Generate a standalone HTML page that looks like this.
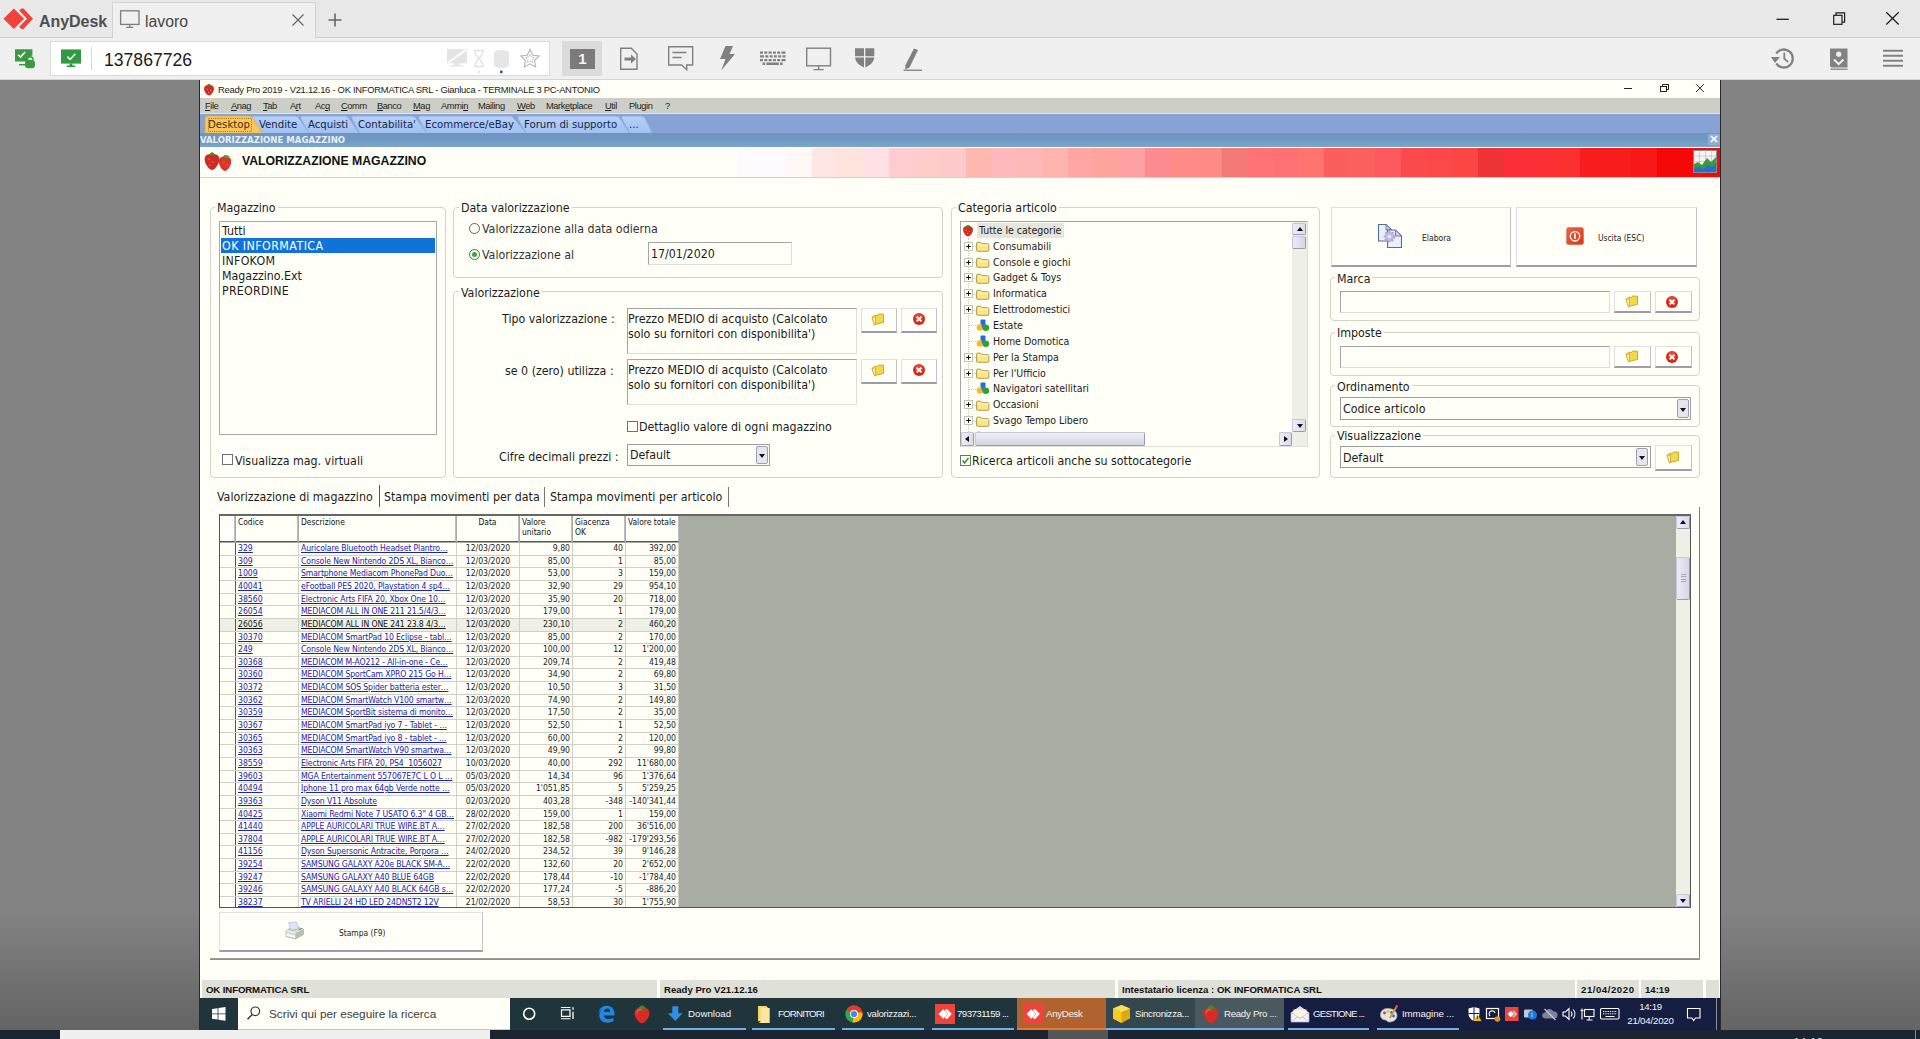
<!DOCTYPE html>
<html lang="it">
<head>
<meta charset="utf-8">
<title>AnyDesk - lavoro</title>
<style>
*{box-sizing:border-box;margin:0;padding:0}
html,body{width:1920px;height:1039px;overflow:hidden;background:#838383}
#shade{position:absolute;left:0;top:910px;width:1920px;height:120px;background:linear-gradient(180deg,#838383,#646464)}
#strip{position:absolute;left:0;top:1030px;width:1920px;height:9px;background:#1b2430}
body{position:relative;font-family:"Liberation Sans","DejaVu Sans",sans-serif;font-size:13px;color:#111}
.a{position:absolute}
i{font-style:normal}
b{font-weight:normal}
/* ---------- AnyDesk chrome ---------- */
#adt{position:absolute;left:0;top:0;width:1920px;height:38px;background:#e8e8e8;border-bottom:1px solid #cfcfcf}
#adtab{position:absolute;left:112px;top:2px;width:204px;height:36px;background:#f0f0f0;border:1px solid #d2d2d2;border-bottom:none}
#adbar{position:absolute;left:0;top:38px;width:1920px;height:42px;background:#f0f0f0;border-bottom:1px solid #d4d4d4}
#adaddr{position:absolute;left:50px;top:41px;width:500px;height:35px;background:#fff;border:1px solid #dadada}
.adname{position:absolute;left:39px;top:12.5px;font-size:16px;font-weight:bold;color:#4f4f4f;letter-spacing:-0.05px;line-height:18px}
.adtabt{position:absolute;left:145px;top:12.5px;font-size:15.8px;color:#444;line-height:18px}
.adid{position:absolute;left:104px;top:49.7px;font-size:17.6px;color:#1c1c1c;line-height:21px}
/* ---------- remote window ---------- */
#rw{position:absolute;left:199px;top:80px;width:1522px;height:950px;background:#fffff7;border-left:1px solid #2a2a2a;border-right:1px solid #2a2a2a;overflow:hidden}
#rw *{position:absolute}
#rw u, #rw span, #rw em, #rw .st{position:static}
.app{font-family:"DejaVu Sans Condensed","DejaVu Sans","Liberation Sans",sans-serif;font-stretch:condensed}
#wtitle{left:0;top:0;width:1520px;height:18px;background:#fffff7}
#wtitle .t{font-family:"Liberation Sans",sans-serif;left:18px;top:3.5px;font-size:9.4px;letter-spacing:-.26px;color:#222;white-space:nowrap}
#wmenu{left:0;top:18px;width:1520px;height:16px;background:#cdcfc7}
#wmenu b{font-family:"Liberation Sans",sans-serif;top:3px;font-size:9.3px;letter-spacing:-.4px;color:#222;white-space:nowrap}
#wmenu b u{text-decoration:underline}
#wtabs{left:0;top:34px;width:1520px;height:20px;background:#87a3d6}
#wsub{left:0;top:53px;width:1520px;height:14px;background:linear-gradient(180deg,#7194c1 0,#7098c3 50%,#7aa7c9 100%)}
#wsub .t{left:0;top:1px;font-size:9.5px;font-weight:bold;color:#e9eff6;white-space:nowrap;font-family:"DejaVu Sans Condensed","DejaVu Sans",sans-serif}
#whead{left:0;top:67px;width:1520px;height:31px;background:#fffff7}
#whead .t{font-family:"Liberation Sans",sans-serif;left:42px;top:7px;font-size:12.25px;font-weight:bold;color:#111;white-space:nowrap}
.wt{font-family:"DejaVu Sans Condensed","DejaVu Sans",sans-serif;font-size:11.3px;color:#15254a;top:4px;white-space:nowrap}
/* group boxes */
.gb{border:1px solid #d3d4c9;border-radius:4px}
.gl{margin-top:1px;background:#fffff7;font-size:12.3px;color:#1c1c1c;white-space:nowrap;padding:0 2px;line-height:14px;height:14px}
.lbl{margin-top:1px;font-size:12.3px;color:#1c1c1c;white-space:nowrap;line-height:15px}
.inp{background:#fffff7;border:1px solid #a3a4a6;border-right-color:#dedfd6;border-bottom-color:#dedfd6}
.cmb{border-color:#9c9da2 !important}
.btn{background:#fffff7;border:1px solid #dfdfe6;border-right:1px solid #c2c2ce;border-bottom:2px solid #9c9cac}
.cb{width:11px;height:11px;border:1px solid #66747e;background:#fffff7}
.rd{width:11px;height:11px;border:1px solid #56677a;border-radius:50%;background:#fffff7}
.ddb{width:12px;background:#e6e6ee;border:1px solid #9d9fae;border-radius:2px}
.ddb i{left:2px;top:50%;margin-top:-1px;width:0;height:0;border-left:3px solid transparent;border-right:3px solid transparent;border-top:4px solid #111}
.tl{font-size:10.5px;color:#1c1c1c;white-space:nowrap;line-height:15px;height:15px}
.tt{font-family:"Liberation Sans",sans-serif;font-size:9.7px;letter-spacing:-.3px;color:#f4f4f4;white-space:nowrap;line-height:13px;height:13px}
.ts{font-family:"Liberation Sans",sans-serif;font-size:11.75px;color:#3c3c3c;white-space:nowrap;line-height:15px}
/* grid */
#grid{left:19px;top:434px;width:1472px;height:394px;background:#a9aca2;border:1px solid #555;border-top:2px solid #666;overflow:hidden}
.ghead{top:0;height:26px;background:#fffff7;border-right:1px solid #b9bbd0;border-bottom:1px solid #555;font-size:8.4px;line-height:10px;color:#111;padding:1px 2px 0 2px;overflow:hidden;white-space:nowrap}
.grow{left:0;width:459px;background:#fffff7;border-bottom:1px solid #cfd0c6;font-size:8.6px;color:#222;white-space:nowrap}
.grow.sel{background:#eef0e6}
.grow .rh{left:0;top:0;bottom:0;width:16px;border-right:1px solid #555}
.grow .c{top:0;bottom:0;overflow:hidden;line-height:11px;border-right:1px solid #cfd0c6;padding-top:0}
.grow u{text-decoration:underline;color:#1a22b4}
.grow.sel u{color:#111}
.c1{left:16px;width:63px;padding-left:2px}
.c2{left:79px;width:158px;padding-left:2px;letter-spacing:-0.12px}
.c3{left:237px;width:63px;text-align:center}
.c4{left:300px;width:53px;text-align:right;padding-right:2px}
.c5{left:353px;width:53px;text-align:right;padding-right:2px}
.c6{left:406px;width:53px;text-align:right;padding-right:2px}
.vsb{right:0;top:0;width:14px;bottom:0;background:#eef0e5}
.sbtn{left:0;width:14px;height:13px;background:linear-gradient(90deg,#efedf8,#dddbea);border:1px solid #c8c6d8;border-right-color:#9c9ab2;border-bottom-color:#9c9ab2;border-radius:2px}
.sbtn.up{top:0}.sbtn.dn{bottom:0}
.sbtn i{left:3px;top:3px;width:0;height:0;border-left:3px solid transparent;border-right:3px solid transparent}
.sbtn.up i{border-bottom:4px solid #111}
.sbtn.dn i{border-top:4px solid #111;top:4px}
.thumb{left:0;top:41px;width:14px;height:43px;background:linear-gradient(90deg,#ecebf5,#d6d5e4);border:1px solid #c8c6d8;border-right-color:#9c9ab2;border-bottom-color:#9c9ab2;border-radius:2px}
.grip{left:4px;top:50%;margin-top:-5px;width:5px;height:10px;background:repeating-linear-gradient(180deg,#a8a6c0 0 1px,transparent 1px 2.500px)}
/* status + taskbar */
#wstat{left:0;top:900px;width:1520px;height:18px;background:#fffff7}
#wstat b{font-family:"Liberation Sans",sans-serif;top:0;height:18px;background:#dfe0d8;font-size:9.6px;font-weight:bold;color:#111;line-height:19px;padding-left:4px;white-space:nowrap}
#tb{left:0;top:918px;width:1520px;height:32px;background:#20343c}
#tb .ti{top:0;height:31px;font-size:10.2px;color:#f2f2f2;white-space:nowrap;line-height:31px}
#tb .ti em{font-style:normal;left:0;right:0;bottom:0;height:2px;background:#76b9ed;position:absolute}
#tb .ti .lb{position:absolute;left:31px;top:0;letter-spacing:-0.1px}
</style>
</head>
<body>

<div id="shade"></div>
<div id="strip"><div class="a" style="left:60px;top:0;width:430px;height:9px;background:#f0f0f0"></div><div class="a" style="left:1048px;top:0;width:60px;height:9px;background:#565656"></div><div class="a" style="left:1915px;top:0;width:1px;height:9px;background:#8a8a8a"></div><div class="a" style="left:1794px;top:5.500px;font-size:9.500px;color:#eee;line-height:9px;letter-spacing:1.200px">14:19</div></div>
<!-- AnyDesk title bar -->
<div id="adt"></div>
<svg class="a" style="left:0;top:0" width="112" height="38" viewBox="0 0 112 38">
  <path d="M3.5 18.7 L13.8 8.4 L24.1 18.7 L13.8 29 Z" fill="#ef443b"/>
  <path d="M21.3 8.4 L23.5 8.4 L33 18.7 L23.5 29 L21.3 29 L19.2 26.8 L27 18.7 L19.2 10.6 Z" fill="#ef443b"/>
</svg>
<div class="adname">AnyDesk</div>
<div id="adtab"></div>
<svg class="a" style="left:119px;top:9px" width="22" height="20" viewBox="0 0 22 20">
  <rect x="1.6" y="1.8" width="18.4" height="13.6" fill="none" stroke="#7c7c7c" stroke-width="1.3"/>
  <path d="M10.8 15.4v2.6M7.3 18.3h7" stroke="#7c7c7c" stroke-width="1.2" fill="none"/>
</svg>
<div class="adtabt">lavoro</div>
<svg class="a" style="left:291px;top:13px" width="14" height="14" viewBox="0 0 14 14"><path d="M1.5 1.5l11 11M12.5 1.5l-11 11" stroke="#666" stroke-width="1.2"/></svg>
<svg class="a" style="left:327px;top:12px" width="16" height="16" viewBox="0 0 16 16"><path d="M8 1.5v13M1.5 8h13" stroke="#666" stroke-width="1.6"/></svg>
<!-- window buttons -->
<svg class="a" style="left:1770px;top:6px" width="140" height="26" viewBox="0 0 140 26">
  <path d="M6.5 13.3h12.3" stroke="#1e1e1e" stroke-width="1.3"/>
  <rect x="63.7" y="9.3" width="8.3" height="9" fill="#e8e8e8" stroke="#1e1e1e" stroke-width="1.2"/>
  <path d="M66 9.3V6.8h8.6v9.4h-2.6" fill="none" stroke="#1e1e1e" stroke-width="1.2"/>
  <path d="M116.3 6.2l12.4 12.3M128.7 6.2l-12.4 12.3" stroke="#1e1e1e" stroke-width="1.2"/>
</svg>
<!-- AnyDesk toolbar -->
<div id="adbar"></div>
<div id="adaddr"></div>
<svg class="a" style="left:14px;top:48px" width="24" height="22" viewBox="0 0 24 22">
  <path d="M1 1.2h17.4v6.4c-2.6.4-4.2 2.2-4.200 4.800v1H1z" fill="#3a9a44"/>
  <path d="M4.200 6.800l2.300 2.300 4.600-5" stroke="#fff" stroke-width="1.5" fill="none"/>
  <path d="M5 16h7v1.400H5z" fill="#3a9a44"/>
  <path d="M12.600 12.200c0-2 1.300-3.500 3.300-3.500s3.300 1.500 3.300 3.500" fill="none" stroke="#3a9a44" stroke-width="1.500"/>
  <rect x="11" y="12" width="10" height="8.200" rx="3.200" fill="#3a9a44"/>
</svg>
<svg class="a" style="left:60px;top:48px" width="24" height="22" viewBox="0 0 24 22">
  <rect x="1" y="1.400" width="20" height="14.200" fill="#2f9a41"/>
  <path d="M7.400 8.600l2.700 2.700 5.300-5.600" stroke="#fff" stroke-width="1.500" fill="none"/>
  <path d="M9.600 15.600h2.800v2h2.800v1.300H6.800v-1.300h2.800z" fill="#2f9a41"/>
</svg>
<div class="a" style="left:91px;top:47px;width:1px;height:23px;background:#d8d8d8"></div>
<div class="adid">137867726</div>
<!-- faded icons -->
<svg class="a" style="left:444px;top:46px" width="100" height="30" viewBox="0 0 100 30">
  <path d="M3 3.200h20v14H3z" fill="#e4e4e4"/><path d="M10 17h6v2.500h-6z" fill="#e4e4e4"/><path d="M6 20h14" stroke="#e4e4e4" stroke-width="1.300"/>
  <path d="M4 16.500L22 4" stroke="#fff" stroke-width="1.800"/>
  <path d="M30 4.500h10M30 20.500h10M31 5c0 5 3.500 5.500 3.500 7.500S31 15 31 20M39 5c0 5-3.500 5.500-3.500 7.500S39 15 39 20" stroke="#e2e2e2" stroke-width="1.400" fill="none"/>
  <path d="M50 7c0-4 15-4 15 0v12c0 4-15 4-15 0z" fill="#e6e6e6"/>
  <path d="M86 3.200l2.800 6 6.400.8-4.700 4.500 1.200 6.500-5.700-3.200-5.700 3.200 1.200-6.500-4.700-4.500 6.400-.8z" fill="#fff" stroke="#b4b4b4" stroke-width="1.100"/>
  <path d="M86 8.200l1.300 2.900 3 .4-2.200 2.100.6 3.100-2.700-1.500-2.700 1.500.6-3.100-2.200-2.100 3-.4z" fill="none" stroke="#c2c2c2" stroke-width="0.800"/>
  <circle cx="35" cy="26" r="1.200" fill="#dfe5f1"/><circle cx="57.300" cy="26" r="1.400" fill="#234f9f"/>
</svg>
<!-- monitor "1" button -->
<div class="a" style="left:562px;top:41px;width:40px;height:35px;background:#dbdbdb"></div>
<div class="a" style="left:570px;top:49px;width:25px;height:20px;background:#7b7b7b;color:#f4f4f4;font-weight:bold;font-size:15px;line-height:20px;text-align:center">1</div>
<!-- toolbar icons -->
<svg class="a" style="left:612px;top:40px" width="330" height="38" viewBox="0 0 330 38">
  <g fill="none" stroke="#808080" stroke-width="1.400">
    <path d="M8.700 8.200h10.600l5.700 5.800v15.300H8.700z"/>
    <path d="M56.700 6.700h24v18.300h-6v4.700l-5-4.700H56.700z"/>
    <path d="M60.500 12.500h14M60.500 17.500h9" stroke-width="1.600"/>
    <rect x="194.700" y="8.200" width="23.800" height="17.600"/>
    <path d="M206.600 25.800v3.400M201.500 29.600h10.200"/>
  </g>
  <g fill="#808080">
    <path d="M12.500 17.500h6.500v-3l5 4.500-5 4.500v-3h-6.500z"/>
    <path d="M113.500 6h7.500l-3.500 8h5.500l-13.800 16.500 4.300-11.500h-5.500z"/>
    <path d="M148 11.500h3v2.300h-3zM152.300 11.500h3v2.300h-3zM156.600 11.500h3v2.300h-3zM160.900 11.500h3v2.300h-3zM165.200 11.500h3v2.300h-3zM169.500 11.500h4v2.300h-4zM148 15.200h4v2.300h-4zM153.300 15.200h3v2.300h-3zM157.600 15.200h3v2.300h-3zM161.900 15.200h3v2.300h-3zM166.200 15.200h3v2.300h-3zM170.500 15.200h3v2.300h-3zM148 18.900h3v2.300h-3zM152.300 18.900h3v2.300h-3zM156.600 18.900h3v2.300h-3zM160.900 18.900h3v2.300h-3zM165.200 18.900h3v2.300h-3zM169.500 18.900h4v2.300h-4zM150.500 22.600h2.500v2.300h-2.500zM154.300 22.600h12.500v2.300h-12.500zM168.100 22.600h2.500v2.300h-2.500z"/>
    <path d="M243 8.300h9v8h-9zM253.300 8.300h9v8h-9zM243 17.600h9v9.800c-4.500-1.700-8.300-4.800-9-9.800zM253.300 17.600h9c-.7 5-4.500 8.100-9 9.800z"/>
    <path d="M302 8.500l4 1.600-8.500 17.400-4.200 2 .2-4.500z"/>
    <path d="M291.500 29.600h18.500v1.300h-18.500z"/>
  </g>
</svg>
<svg class="a" style="left:1766px;top:44px" width="144" height="30" viewBox="0 0 144 30">
  <path d="M10.300 9.500a9 9 0 1 1 0 10" fill="none" stroke="#828282" stroke-width="2.300"/>
  <path d="M5 13h9l-5 6z" fill="#828282"/>
  <path d="M18.300 8.500v6.200l3.800 3.300" fill="none" stroke="#828282" stroke-width="1.800"/>
  <path d="M64 4.500h17.500v19H66a2 2 0 0 1-2-2z" fill="#828282"/>
  <path d="M64.500 25.200h17" stroke="#828282" stroke-width="1.300"/>
  <circle cx="72.700" cy="10.200" r="2.600" fill="#f0f0f0"/>
  <path d="M68 15.500l4.700 4.700 4.700-4.700" stroke="#f0f0f0" stroke-width="2" fill="none"/>
  <path d="M117 6.700h20M117 11.700h20M117 16.700h20M117 21.700h20" stroke="#828282" stroke-width="1.900"/>
</svg>

<div id="rw" class="app">
<!-- window title -->
<div id="wtitle">
  <svg style="left:3px;top:3px" width="12" height="13" viewBox="0 0 12 13"><path d="M6 2.600C2 1.500.5 4 1.200 7c.6 2.600 2.800 5.200 4.800 5.500 2-.3 4.200-2.900 4.800-5.500C11.500 4 10 1.500 6 2.600z" fill="#d42a22"/><path d="M3 2.600L6 .8l3 1.800-3 .9z" fill="#4a8a2a"/><circle cx="4" cy="6" r=".5" fill="#f7b0a0"/><circle cx="7.500" cy="7.500" r=".5" fill="#f7b0a0"/><circle cx="5.500" cy="9.500" r=".5" fill="#f7b0a0"/></svg>
  <b class="t">Ready Pro 2019 - V21.12.16 - OK INFORMATICA SRL - Gianluca - TERMINALE 3 PC-ANTONIO</b>
  <svg style="left:1418px;top:1px" width="96" height="14" viewBox="0 0 96 14"><path d="M6 7.500h8" stroke="#222" stroke-width="1"/><rect x="42.500" y="5.500" width="6" height="5" fill="#fffff7" stroke="#222" stroke-width="1"/><path d="M44.500 5.500V3.500h6v5h-2" fill="none" stroke="#222" stroke-width="1"/><path d="M78 3.200l7.800 7.800M85.800 3.200L78 11" stroke="#222" stroke-width="1"/></svg>
</div>
<!-- menu bar -->
<div id="wmenu">
  <b style="left:5px"><u>F</u>ile</b><b style="left:31px"><u>A</u>nag</b><b style="left:63px"><u>T</u>ab</b><b style="left:90px">A<u>r</u>t</b><b style="left:115px">Ac<u>q</u></b><b style="left:141px"><u>C</u>omm</b><b style="left:177px"><u>B</u>anco</b><b style="left:213px"><u>M</u>ag</b><b style="left:241px">Ammi<u>n</u></b><b style="left:278px">Mailin<u>g</u></b><b style="left:317px"><u>W</u>eb</b><b style="left:346px">Mark<u>e</u>tplace</b><b style="left:405px"><u>U</u>til</b><b style="left:429px">Plugin</b><b style="left:465px">?</b>
</div>
<div style="left:0;top:33px;width:1520px;height:1px;background:#dbe4f4"></div>
<!-- tab strip -->
<div id="wtabs">
  <svg style="left:1.500px;top:0" width="460" height="20" viewBox="0 0 460 20"><defs><linearGradient id="tg" x1="0" y1="0" x2="0" y2="1"><stop offset="0" stop-color="#b6d1f8"/><stop offset="1" stop-color="#a0c0f0"/></linearGradient></defs>
    <g fill="url(#tg)" stroke="#8ca8dc" stroke-width=".9">
      <path d="M428 20L420 5q-1.500-3 2-3h17q3 0 4.500 3L451 20z"/>
      <path d="M324 20L316 5q-1.500-3 2-3h96q3 0 4.500 3L428 20z"/>
      <path d="M225 20L217 5q-1.500-3 2-3h89q3 0 4.500 3L325 20z"/>
      <path d="M158 20L150 5q-1.500-3 2-3h58q3 0 4.500 3L226 20z"/>
      <path d="M107 20L99 5q-1.500-3 2-3h42q3 0 4.500 3L158 20z"/>
      <path d="M58 20L50 5q-1.500-3 2-3h41q3 0 4.500 3L108 20z"/>
    </g>
    <path d="M3 20V5q0-3 3-3h41q3 0 4.500 3L61 20z" fill="#fbc65c" stroke="#e0a840" stroke-width=".8"/>
    <rect x="6.500" y="4.500" width="43" height="13" fill="none" stroke="#7a5a10" stroke-width=".8" stroke-dasharray="1 1.200"/>
  </svg>
  <b class="wt" style="left:8px;color:#4a3000">Desktop</b>
  <b class="wt" style="left:59px">Vendite</b>
  <b class="wt" style="left:108px">Acquisti</b>
  <b class="wt" style="left:158px">Contabilita'</b>
  <b class="wt" style="left:225px">Ecommerce/eBay</b>
  <b class="wt" style="left:324px">Forum di supporto</b>
  <b class="wt" style="left:429px">...</b>
</div>
<!-- sub title -->
<div id="wsub"><b class="t">VALORIZZAZIONE MAGAZZINO</b>
  <div style="left:1508px;top:1px;width:12px;height:11px;background:#8fb0d4;border-radius:2px"></div>
  <svg style="left:1510px;top:2px" width="8" height="8" viewBox="0 0 8 8"><path d="M1 1l6 6M7 1L1 7" stroke="#fff" stroke-width="1.700"/></svg>
</div>
<!-- header with gradient -->
<div id="whead">
  <div style="left:537px;top:1px;width:49px;height:28.5px;background:#fffafd"></div>
  <div style="left:586px;top:1px;width:934px;height:28.5px;background:linear-gradient(90deg,#fff8f6 0 26px,#ffe6e2 26px 51px,#ffe4dc 51px 77px,#ffe0e4 77px 103px,#ffccd0 103px 129px,#ffcccc 129px 154px,#ffcaca 154px 180px,#ffb8b0 180px 205px,#ffb8bc 205px 231px,#ffb8b8 231px 256px,#ffb4b0 256px 282px,#ffa6a2 282px 308px,#ffa49c 308px 333px,#ffa0a4 333px 359px,#fc8c90 359px 384px,#ff8c88 384px 410px,#ff8a86 410px 436px,#f47a78 436px 461px,#ff7276 461px 487px,#ff7074 487px 512px,#ff746e 512px 538px,#fc5e5c 538px 564px,#fc605c 564px 589px,#fc5a5e 589px 615px,#fc4a4c 615px 640px,#fc4848 640px 666px,#fc4644 666px 692px,#ee3434 692px 717px,#fc2e36 717px 743px,#fc3034 743px 768px,#fc302e 768px 794px,#f81c1e 794px 820px,#f81c1c 820px 845px,#f81818 845px 871px,#f40808 871px 934px)"></div>
  <div style="left:0;top:29.5px;width:1520px;height:1px;background:#d2d3ca"></div>
  <svg style="left:3px;top:3px" width="32" height="24" viewBox="0 0 32 24">
    <path d="M9 4.500C3 3 .8 7 2 11.500c1 4 4 8 7 8.500 3-.5 6-4.500 7-8.500C17.200 7 15 3 9 4.500z" fill="#cf2b22"/>
    <path d="M22 7C17 6 15 9.500 16 13.500c.8 3.500 3.300 7 6 7.500 2.700-.5 5.200-4 6-7.500C29 9.500 27 6 22 7z" fill="#d8362a"/>
    <path d="M5.500 4.500L9 2l3.500 2.500L9 6z" fill="#4c8c2c"/><path d="M19 7l3-2.200 4.500 1.200-1.500 2.200-3-.6z" fill="#5c9c34"/>
    <circle cx="6" cy="9" r=".6" fill="#f4a090"/><circle cx="10" cy="12" r=".6" fill="#f4a090"/><circle cx="7" cy="15" r=".6" fill="#f4a090"/><circle cx="21" cy="12" r=".6" fill="#f4a090"/><circle cx="24" cy="15" r=".6" fill="#f4a090"/>
  </svg>
  <b class="t">VALORIZZAZIONE MAGAZZINO</b>
  <svg style="left:1493px;top:3px" width="25" height="24" viewBox="0 0 25 24">
    <rect x=".5" y=".5" width="23" height="22" fill="#f4f4f4" stroke="#8a8a8a" stroke-width="1"/>
    <path d="M.5 6h23M.5 11.500h23M.5 17h23M6.500 .5v22M12.500 .5v22M18.500 .5v22" stroke="#b8b8b8" stroke-width=".6"/>
    <path d="M1 22V14l4-2 4 3 5-7 4 4 5-5v15z" fill="#3c9a3c"/>
    <path d="M1 22v-4l5-1 4 2 5-4 4 2 4-3v8z" fill="#2a6ccc"/>
  </svg>
</div>

<div id="pg" style="left:-200px;top:-80px;width:1920px;height:1039px">
<!-- ===== Magazzino ===== -->
<div class="gb" style="left:210px;top:207px;width:236px;height:271px"></div>
<b class="gl" style="left:215px;top:200px">Magazzino</b>
<div class="inp" style="left:219px;top:221px;width:218px;height:214px;border-color:#a6a8a2"></div>
<b class="lbl" style="left:222px;top:223px">Tutti</b>
<div style="left:221px;top:238px;width:214px;height:15px;background:#1173d9"></div>
<b class="lbl" style="left:222px;top:238px;color:#fff;letter-spacing:.45px">OK INFORMATICA</b>
<b class="lbl" style="left:222px;top:253px;letter-spacing:.25px">INFOKOM</b>
<b class="lbl" style="left:222px;top:268px">Magazzino.Ext</b>
<b class="lbl" style="left:222px;top:283px;letter-spacing:.25px">PREORDINE</b>
<div class="cb" style="left:222px;top:454px"></div>
<b class="lbl" style="left:235px;top:453px">Visualizza mag. virtuali</b>

<!-- ===== Data valorizzazione ===== -->
<div class="gb" style="left:453px;top:207px;width:490px;height:71px"></div>
<b class="gl" style="left:459px;top:200px">Data valorizzazione</b>
<div class="rd" style="left:469px;top:223px"></div>
<b class="lbl" style="left:482px;top:221px;color:#333">Valorizzazione alla data odierna</b>
<div class="rd" style="left:469px;top:249px"></div>
<div style="left:472px;top:252px;width:5px;height:5px;border-radius:50%;background:#2fae2f"></div>
<b class="lbl" style="left:482px;top:247px;color:#333">Valorizzazione al</b>
<div class="inp" style="left:648px;top:242px;width:144px;height:23px"></div>
<b class="lbl" style="left:651px;top:246px">17/01/2020</b>

<!-- ===== Valorizzazione ===== -->
<div class="gb" style="left:453px;top:291px;width:490px;height:187px"></div>
<b class="gl" style="left:459px;top:285px">Valorizzazione</b>
<b class="lbl" style="left:502px;top:311px">Tipo valorizzazione :</b>
<div class="inp" style="left:627px;top:308px;width:230px;height:46px"></div>
<b class="lbl" style="left:628px;top:311px;line-height:15px">Prezzo MEDIO di acquisto (Calcolato<br>solo su fornitori con disponibilita')</b>
<div class="btn" style="left:861px;top:308px;width:36px;height:25px"></div>
<div class="btn" style="left:901px;top:308px;width:36px;height:25px"></div>
<b class="lbl" style="left:505px;top:363px">se 0 (zero) utilizza :</b>
<div class="inp" style="left:627px;top:359px;width:230px;height:46px"></div>
<b class="lbl" style="left:628px;top:362px;line-height:15px">Prezzo MEDIO di acquisto (Calcolato<br>solo su fornitori con disponibilita')</b>
<div class="btn" style="left:861px;top:359px;width:36px;height:25px"></div>
<div class="btn" style="left:901px;top:359px;width:36px;height:25px"></div>
<div class="cb" style="left:627px;top:421px"></div>
<b class="lbl" style="left:639px;top:419px">Dettaglio valore di ogni magazzino</b>
<b class="lbl" style="left:499px;top:449px">Cifre decimali prezzi :</b>
<div class="inp cmb" style="left:627px;top:444px;width:143px;height:22px"></div>
<b class="lbl" style="left:630px;top:447px">Default</b>
<div class="ddb" style="left:756px;top:446px;height:18px"><i></i></div>

<!-- ===== Categoria articolo ===== -->
<div class="gb" style="left:951px;top:207px;width:369px;height:271px"></div>
<b class="gl" style="left:956px;top:200px">Categoria articolo</b>
<div class="inp" style="left:960px;top:221px;width:348px;height:226px"></div>
<div style="left:961px;top:222px;width:331px;height:210px;overflow:hidden"><div id="tr" style="left:-961px;top:-222px;width:1920px;height:1039px">
<div style="left:977px;top:223px;width:87px;height:15px;background:#e4e5dc"></div>
<div style="left:968px;top:238px;width:0;height:200px;border-left:1px dotted #c8cac0"></div>
<svg style="left:962px;top:224px" width="12" height="13" viewBox="0 0 12 13"><path d="M6 2.600C2 1.500.5 4 1.200 7c.6 2.600 2.800 5.200 4.800 5.500 2-.3 4.200-2.900 4.800-5.500C11.500 4 10 1.500 6 2.600z" fill="#d42a22"/><path d="M3 2.600L6 .8l3 1.800-3 .9z" fill="#4a8a2a"/><circle cx="4" cy="6" r=".5" fill="#f7b0a0"/><circle cx="7.500" cy="7.500" r=".5" fill="#f7b0a0"/><circle cx="5.500" cy="9.500" r=".5" fill="#f7b0a0"/></svg>
<b class="tl" style="left:979px;top:223px">Tutte le categorie</b>
<div style="left:969px;top:246px;width:7px;height:0;border-top:1px dotted #c8cac0"></div>
<svg style="left:964px;top:242px" width="9" height="9" viewBox="0 0 9 9"><rect x=".5" y=".5" width="8" height="8" fill="#fffff7" stroke="#b4b8ac" stroke-width=".8"/><path d="M2.200 4.500h4.600M4.500 2.200v4.600" stroke="#111" stroke-width="1"/></svg>
<svg style="left:976px;top:240px" width="14" height="12" viewBox="0 0 14 12"><path d="M.6 3.200q0-1 1-1h3.200l1.300 1.500h5.800q1 0 1 1v5.600q0 1-1 1H1.600q-1 0-1-1z" fill="#f8e68c" stroke="#a8903c" stroke-width=".9"/><path d="M1.500 5h11" stroke="#fdf6c4" stroke-width=".9"/></svg>
<b class="tl" style="left:993px;top:239px">Consumabili</b>
<div style="left:969px;top:262px;width:7px;height:0;border-top:1px dotted #c8cac0"></div>
<svg style="left:964px;top:258px" width="9" height="9" viewBox="0 0 9 9"><rect x=".5" y=".5" width="8" height="8" fill="#fffff7" stroke="#b4b8ac" stroke-width=".8"/><path d="M2.200 4.500h4.600M4.500 2.200v4.600" stroke="#111" stroke-width="1"/></svg>
<svg style="left:976px;top:256px" width="14" height="12" viewBox="0 0 14 12"><path d="M.6 3.200q0-1 1-1h3.200l1.300 1.500h5.800q1 0 1 1v5.600q0 1-1 1H1.600q-1 0-1-1z" fill="#f8e68c" stroke="#a8903c" stroke-width=".9"/><path d="M1.500 5h11" stroke="#fdf6c4" stroke-width=".9"/></svg>
<b class="tl" style="left:993px;top:255px">Console e giochi</b>
<div style="left:969px;top:278px;width:7px;height:0;border-top:1px dotted #c8cac0"></div>
<svg style="left:964px;top:273px" width="9" height="9" viewBox="0 0 9 9"><rect x=".5" y=".5" width="8" height="8" fill="#fffff7" stroke="#b4b8ac" stroke-width=".8"/><path d="M2.200 4.500h4.600M4.500 2.200v4.600" stroke="#111" stroke-width="1"/></svg>
<svg style="left:976px;top:272px" width="14" height="12" viewBox="0 0 14 12"><path d="M.6 3.200q0-1 1-1h3.200l1.300 1.500h5.800q1 0 1 1v5.600q0 1-1 1H1.600q-1 0-1-1z" fill="#f8e68c" stroke="#a8903c" stroke-width=".9"/><path d="M1.500 5h11" stroke="#fdf6c4" stroke-width=".9"/></svg>
<b class="tl" style="left:993px;top:270px">Gadget &amp; Toys</b>
<div style="left:969px;top:294px;width:7px;height:0;border-top:1px dotted #c8cac0"></div>
<svg style="left:964px;top:289px" width="9" height="9" viewBox="0 0 9 9"><rect x=".5" y=".5" width="8" height="8" fill="#fffff7" stroke="#b4b8ac" stroke-width=".8"/><path d="M2.200 4.500h4.600M4.500 2.200v4.600" stroke="#111" stroke-width="1"/></svg>
<svg style="left:976px;top:288px" width="14" height="12" viewBox="0 0 14 12"><path d="M.6 3.200q0-1 1-1h3.200l1.300 1.500h5.800q1 0 1 1v5.600q0 1-1 1H1.600q-1 0-1-1z" fill="#f8e68c" stroke="#a8903c" stroke-width=".9"/><path d="M1.500 5h11" stroke="#fdf6c4" stroke-width=".9"/></svg>
<b class="tl" style="left:993px;top:286px">Informatica</b>
<div style="left:969px;top:310px;width:7px;height:0;border-top:1px dotted #c8cac0"></div>
<svg style="left:964px;top:305px" width="9" height="9" viewBox="0 0 9 9"><rect x=".5" y=".5" width="8" height="8" fill="#fffff7" stroke="#b4b8ac" stroke-width=".8"/><path d="M2.200 4.500h4.600M4.500 2.200v4.600" stroke="#111" stroke-width="1"/></svg>
<svg style="left:976px;top:304px" width="14" height="12" viewBox="0 0 14 12"><path d="M.6 3.200q0-1 1-1h3.200l1.300 1.500h5.800q1 0 1 1v5.600q0 1-1 1H1.600q-1 0-1-1z" fill="#f8e68c" stroke="#a8903c" stroke-width=".9"/><path d="M1.500 5h11" stroke="#fdf6c4" stroke-width=".9"/></svg>
<b class="tl" style="left:993px;top:302px">Elettrodomestici</b>
<div style="left:969px;top:325px;width:7px;height:0;border-top:1px dotted #c8cac0"></div>
<svg style="left:976px;top:319px" width="14" height="13" viewBox="0 0 14 13"><rect x="4.500" y=".5" width="5" height="5.500" rx="1" fill="#2c6cd8"/><circle cx="3.800" cy="8.500" r="3.200" fill="#f2c024"/><circle cx="9.800" cy="8.800" r="3.300" fill="#2ca42c"/><circle cx="7" cy="7" r="1.600" fill="#3a78dc"/></svg>
<b class="tl" style="left:993px;top:318px">Estate</b>
<div style="left:969px;top:341px;width:7px;height:0;border-top:1px dotted #c8cac0"></div>
<svg style="left:976px;top:335px" width="14" height="13" viewBox="0 0 14 13"><rect x="4.500" y=".5" width="5" height="5.500" rx="1" fill="#2c6cd8"/><circle cx="3.800" cy="8.500" r="3.200" fill="#f2c024"/><circle cx="9.800" cy="8.800" r="3.300" fill="#2ca42c"/><circle cx="7" cy="7" r="1.600" fill="#3a78dc"/></svg>
<b class="tl" style="left:993px;top:334px">Home Domotica</b>
<div style="left:969px;top:357px;width:7px;height:0;border-top:1px dotted #c8cac0"></div>
<svg style="left:964px;top:353px" width="9" height="9" viewBox="0 0 9 9"><rect x=".5" y=".5" width="8" height="8" fill="#fffff7" stroke="#b4b8ac" stroke-width=".8"/><path d="M2.200 4.500h4.600M4.500 2.200v4.600" stroke="#111" stroke-width="1"/></svg>
<svg style="left:976px;top:351px" width="14" height="12" viewBox="0 0 14 12"><path d="M.6 3.200q0-1 1-1h3.200l1.300 1.500h5.800q1 0 1 1v5.600q0 1-1 1H1.600q-1 0-1-1z" fill="#f8e68c" stroke="#a8903c" stroke-width=".9"/><path d="M1.500 5h11" stroke="#fdf6c4" stroke-width=".9"/></svg>
<b class="tl" style="left:993px;top:350px">Per la Stampa</b>
<div style="left:969px;top:373px;width:7px;height:0;border-top:1px dotted #c8cac0"></div>
<svg style="left:964px;top:369px" width="9" height="9" viewBox="0 0 9 9"><rect x=".5" y=".5" width="8" height="8" fill="#fffff7" stroke="#b4b8ac" stroke-width=".8"/><path d="M2.200 4.500h4.600M4.500 2.200v4.600" stroke="#111" stroke-width="1"/></svg>
<svg style="left:976px;top:367px" width="14" height="12" viewBox="0 0 14 12"><path d="M.6 3.200q0-1 1-1h3.200l1.300 1.500h5.800q1 0 1 1v5.600q0 1-1 1H1.600q-1 0-1-1z" fill="#f8e68c" stroke="#a8903c" stroke-width=".9"/><path d="M1.500 5h11" stroke="#fdf6c4" stroke-width=".9"/></svg>
<b class="tl" style="left:993px;top:366px">Per l'Ufficio</b>
<div style="left:969px;top:389px;width:7px;height:0;border-top:1px dotted #c8cac0"></div>
<svg style="left:976px;top:382px" width="14" height="13" viewBox="0 0 14 13"><rect x="4.500" y=".5" width="5" height="5.500" rx="1" fill="#2c6cd8"/><circle cx="3.800" cy="8.500" r="3.200" fill="#f2c024"/><circle cx="9.800" cy="8.800" r="3.300" fill="#2ca42c"/><circle cx="7" cy="7" r="1.600" fill="#3a78dc"/></svg>
<b class="tl" style="left:993px;top:381px">Navigatori satellitari</b>
<div style="left:969px;top:405px;width:7px;height:0;border-top:1px dotted #c8cac0"></div>
<svg style="left:964px;top:400px" width="9" height="9" viewBox="0 0 9 9"><rect x=".5" y=".5" width="8" height="8" fill="#fffff7" stroke="#b4b8ac" stroke-width=".8"/><path d="M2.200 4.500h4.600M4.500 2.200v4.600" stroke="#111" stroke-width="1"/></svg>
<svg style="left:976px;top:399px" width="14" height="12" viewBox="0 0 14 12"><path d="M.6 3.200q0-1 1-1h3.200l1.300 1.500h5.800q1 0 1 1v5.600q0 1-1 1H1.600q-1 0-1-1z" fill="#f8e68c" stroke="#a8903c" stroke-width=".9"/><path d="M1.500 5h11" stroke="#fdf6c4" stroke-width=".9"/></svg>
<b class="tl" style="left:993px;top:397px">Occasioni</b>
<div style="left:969px;top:421px;width:7px;height:0;border-top:1px dotted #c8cac0"></div>
<svg style="left:964px;top:416px" width="9" height="9" viewBox="0 0 9 9"><rect x=".5" y=".5" width="8" height="8" fill="#fffff7" stroke="#b4b8ac" stroke-width=".8"/><path d="M2.200 4.500h4.600M4.500 2.200v4.600" stroke="#111" stroke-width="1"/></svg>
<svg style="left:976px;top:415px" width="14" height="12" viewBox="0 0 14 12"><path d="M.6 3.200q0-1 1-1h3.200l1.300 1.500h5.800q1 0 1 1v5.600q0 1-1 1H1.600q-1 0-1-1z" fill="#f8e68c" stroke="#a8903c" stroke-width=".9"/><path d="M1.500 5h11" stroke="#fdf6c4" stroke-width=".9"/></svg>
<b class="tl" style="left:993px;top:413px">Svago Tempo Libero</b>
<div style="left:969px;top:436px;width:7px;height:0;border-top:1px dotted #c8cac0"></div>
<svg style="left:964px;top:432px" width="9" height="9" viewBox="0 0 9 9"><rect x=".5" y=".5" width="8" height="8" fill="#fffff7" stroke="#b4b8ac" stroke-width=".8"/><path d="M2.200 4.500h4.600M4.500 2.200v4.600" stroke="#111" stroke-width="1"/></svg>
<svg style="left:976px;top:430px" width="14" height="12" viewBox="0 0 14 12"><path d="M.6 3.200q0-1 1-1h3.200l1.300 1.500h5.800q1 0 1 1v5.600q0 1-1 1H1.600q-1 0-1-1z" fill="#f8e68c" stroke="#a8903c" stroke-width=".9"/><path d="M1.500 5h11" stroke="#fdf6c4" stroke-width=".9"/></svg>
<b class="tl" style="left:993px;top:429px">&nbsp;</b>
</div></div>
<!-- scrollbars of tree -->
<div style="left:1292px;top:222px;width:15px;height:211px;background:#eef0e5"></div>
<div class="sbtn" style="left:1292px;top:223px;width:14px;height:12px"><i style="border-bottom:4px solid #111;left:4px;top:3px"></i></div>
<div class="thumb" style="left:1292px;top:236px;width:14px;height:13px"></div>
<div class="sbtn" style="left:1292px;top:419px;width:14px;height:13px"><i style="border-top:4px solid #111;left:4px;top:4px"></i></div>
<div style="left:961px;top:432px;width:346px;height:14px;background:#eef0e5"></div><div style="left:1145px;top:432px;width:134px;height:14px;background:#fffff7"></div>
<div class="sbtn" style="left:961px;top:432px;width:13px;height:14px"><i style="border:3px solid transparent;border-right:4px solid #111;border-left:none;left:3px;top:3px"></i></div>
<div class="thumb" style="left:975px;top:432px;width:170px;height:14px;background:linear-gradient(180deg,#eeeef6,#d4d4e2)"></div>
<div class="sbtn" style="left:1279px;top:432px;width:13px;height:14px"><i style="border:3px solid transparent;border-left:4px solid #111;border-right:none;left:4px;top:3px"></i></div>
<div class="cb" style="left:960px;top:455px"></div>
<svg style="left:961px;top:456px" width="9" height="9" viewBox="0 0 9 9"><path d="M1.500 4.500l2 2.500 4-5" stroke="#2a9a2a" stroke-width="1.600" fill="none"/></svg>
<b class="lbl" style="left:972px;top:453px">Ricerca articoli anche su sottocategorie</b>

<!-- ===== right column ===== -->
<div class="btn" style="left:1331px;top:207px;width:180px;height:60px"></div>
<b style="left:1422px;top:233px;font-size:8.500px;white-space:nowrap;color:#222">Elabora</b>
<div class="btn" style="left:1516px;top:207px;width:181px;height:60px"></div>
<b style="left:1598px;top:233px;font-size:8.400px;white-space:nowrap;color:#222">Uscita (ESC)</b>

<div class="gb" style="left:1330px;top:277px;width:370px;height:44px"></div>
<b class="gl" style="left:1335px;top:271px">Marca</b>
<div class="inp" style="left:1340px;top:291px;width:270px;height:22px"></div>
<div class="btn" style="left:1614px;top:291px;width:37px;height:22px"></div>
<div class="btn" style="left:1655px;top:291px;width:37px;height:22px"></div>

<div class="gb" style="left:1330px;top:332px;width:370px;height:44px"></div>
<b class="gl" style="left:1335px;top:325px">Imposte</b>
<div class="inp" style="left:1340px;top:346px;width:270px;height:22px"></div>
<div class="btn" style="left:1614px;top:346px;width:37px;height:22px"></div>
<div class="btn" style="left:1655px;top:346px;width:37px;height:22px"></div>

<div class="gb" style="left:1330px;top:385px;width:370px;height:42px"></div>
<b class="gl" style="left:1335px;top:379px">Ordinamento</b>
<div class="inp cmb" style="left:1340px;top:397px;width:351px;height:23px"></div>
<b class="lbl" style="left:1343px;top:401px">Codice articolo</b>
<div class="ddb" style="left:1677px;top:399px;height:19px"><i></i></div>

<div class="gb" style="left:1330px;top:435px;width:370px;height:43px"></div>
<b class="gl" style="left:1335px;top:428px">Visualizzazione</b>
<div class="inp cmb" style="left:1340px;top:446px;width:311px;height:22px"></div>
<b class="lbl" style="left:1343px;top:450px">Default</b>
<div class="ddb" style="left:1636px;top:448px;height:18px"><i></i></div>
<div class="btn" style="left:1655px;top:445px;width:37px;height:26px"></div>

<svg style="left:1377px;top:223px" width="26" height="26" viewBox="0 0 26 26">
<path d="M1.500 1.500h7.500l5.500 5.500v11h-13z" fill="#e8f0fc" stroke="#5c6c94" stroke-width="1.100"/><path d="M9 1.500v5.500h5.500z" fill="#c4d4ec" stroke="#5c6c94" stroke-width=".8"/>
<path d="M10.500 7h8l6 6v11.500h-14z" fill="#e8f0fc" stroke="#5c6c94" stroke-width="1.100"/><path d="M18.500 7v6h6z" fill="#c4d4ec" stroke="#5c6c94" stroke-width=".8"/>
<circle cx="12.500" cy="13.600" r="4.800" fill="#c6bae6" stroke="#b0a4d8" stroke-width="2.200" stroke-dasharray="1.900 1.600"/><circle cx="12.500" cy="13.600" r="1.700" fill="#f0ecfa"/>
</svg>
<svg style="left:1566px;top:227px" width="18" height="18" viewBox="0 0 18 18"><defs><linearGradient id="ug" x1="0" y1="0" x2="1" y2="1"><stop offset="0" stop-color="#ea6448"/><stop offset="1" stop-color="#d83818"/></linearGradient></defs>
<rect x=".3" y=".3" width="17.400" height="17.400" rx="2.500" fill="url(#ug)"/><circle cx="9" cy="9.300" r="4.700" fill="none" stroke="#fff" stroke-width="1.300"/><path d="M9 6.500v5.300" stroke="#fff" stroke-width="1.700"/></svg>
<svg style="left:870px;top:312px" width="16" height="14" viewBox="0 0 16 14"><path d="M2 5.500l2.500-2.300 3 .3 1-1.500 5 .2v8.300l-9 2z" fill="#f4d848" stroke="#b49a2c" stroke-width=".8"/><path d="M2 5.500l3.500-.6v8l-1 .3z" fill="#fbeea0" stroke="#b49a2c" stroke-width=".6"/></svg>
<svg style="left:870px;top:363px" width="16" height="14" viewBox="0 0 16 14"><path d="M2 5.500l2.500-2.300 3 .3 1-1.500 5 .2v8.300l-9 2z" fill="#f4d848" stroke="#b49a2c" stroke-width=".8"/><path d="M2 5.500l3.500-.6v8l-1 .3z" fill="#fbeea0" stroke="#b49a2c" stroke-width=".6"/></svg>
<svg style="left:1624px;top:294px" width="16" height="14" viewBox="0 0 16 14"><path d="M2 5.500l2.500-2.300 3 .3 1-1.500 5 .2v8.300l-9 2z" fill="#f4d848" stroke="#b49a2c" stroke-width=".8"/><path d="M2 5.500l3.500-.6v8l-1 .3z" fill="#fbeea0" stroke="#b49a2c" stroke-width=".6"/></svg>
<svg style="left:1624px;top:349px" width="16" height="14" viewBox="0 0 16 14"><path d="M2 5.500l2.500-2.300 3 .3 1-1.500 5 .2v8.300l-9 2z" fill="#f4d848" stroke="#b49a2c" stroke-width=".8"/><path d="M2 5.500l3.500-.6v8l-1 .3z" fill="#fbeea0" stroke="#b49a2c" stroke-width=".6"/></svg>
<svg style="left:1665px;top:450px" width="16" height="14" viewBox="0 0 16 14"><path d="M2 5.500l2.500-2.300 3 .3 1-1.500 5 .2v8.300l-9 2z" fill="#f4d848" stroke="#b49a2c" stroke-width=".8"/><path d="M2 5.500l3.500-.6v8l-1 .3z" fill="#fbeea0" stroke="#b49a2c" stroke-width=".6"/></svg>
<svg style="left:912px;top:312px" width="14" height="14" viewBox="0 0 14 14"><circle cx="7" cy="7" r="6" fill="#d8281c"/><circle cx="7" cy="5.500" r="4" fill="#ec5a48" opacity=".6"/><path d="M4.600 4.600l4.800 4.800M9.400 4.600L4.600 9.400" stroke="#fff" stroke-width="1.900"/></svg>
<svg style="left:912px;top:363px" width="14" height="14" viewBox="0 0 14 14"><circle cx="7" cy="7" r="6" fill="#d8281c"/><circle cx="7" cy="5.500" r="4" fill="#ec5a48" opacity=".6"/><path d="M4.600 4.600l4.800 4.800M9.400 4.600L4.600 9.400" stroke="#fff" stroke-width="1.900"/></svg>
<svg style="left:1665px;top:295px" width="14" height="14" viewBox="0 0 14 14"><circle cx="7" cy="7" r="6" fill="#d8281c"/><circle cx="7" cy="5.500" r="4" fill="#ec5a48" opacity=".6"/><path d="M4.600 4.600l4.800 4.800M9.400 4.600L4.600 9.400" stroke="#fff" stroke-width="1.900"/></svg>
<svg style="left:1665px;top:350px" width="14" height="14" viewBox="0 0 14 14"><circle cx="7" cy="7" r="6" fill="#d8281c"/><circle cx="7" cy="5.500" r="4" fill="#ec5a48" opacity=".6"/><path d="M4.600 4.600l4.800 4.800M9.400 4.600L4.600 9.400" stroke="#fff" stroke-width="1.900"/></svg>
<!-- ===== tab captions ===== -->
<b class="lbl" style="left:217px;top:489px">Valorizzazione di magazzino</b>
<div style="left:379px;top:485px;width:1px;height:22px;background:#555"></div>
<b class="lbl" style="left:384px;top:489px">Stampa movimenti per data</b>
<div style="left:544px;top:487px;width:1px;height:20px;background:#777"></div>
<b class="lbl" style="left:550px;top:489px">Stampa movimenti per articolo</b>
<div style="left:728px;top:487px;width:1px;height:20px;background:#777"></div>
<div style="left:1699px;top:507px;width:1px;height:452px;background:#808080"></div>
<div style="left:210px;top:958px;width:1490px;height:2px;background:linear-gradient(180deg,#a4a49e,#8a8a86)"></div>
</div>

<div id="grid">
<div class="ghead" style="left:0;width:15px"></div>
<div class="ghead" style="left:16px;width:62px;text-align:left"><span>Codice</span></div>
<div class="ghead" style="left:79px;width:157px;text-align:left"><span>Descrizione</span></div>
<div class="ghead" style="left:237px;width:62px;text-align:center"><span>Data</span></div>
<div class="ghead" style="left:300px;width:52px;text-align:left"><span>Valore<br>unitario</span></div>
<div class="ghead" style="left:353px;width:52px;text-align:left"><span>Giacenza<br>OK</span></div>
<div class="ghead" style="left:406px;width:53px;text-align:left"><span>Valore totale</span></div>
<div class="grow" style="top:27px;height:13px">
<i class="rh"></i>
<b class="c c1"><u>329</u></b><b class="c c2"><u>Auricolare Bluetooth Headset Plantro…</u></b><b class="c c3">12/03/2020</b><b class="c c4">9,80</b><b class="c c5">40</b><b class="c c6">392,00</b>
</div>
<div class="grow" style="top:40px;height:12px">
<i class="rh"></i>
<b class="c c1"><u>309</u></b><b class="c c2"><u>Console New Nintendo 2DS XL, Bianco…</u></b><b class="c c3">12/03/2020</b><b class="c c4">85,00</b><b class="c c5">1</b><b class="c c6">85,00</b>
</div>
<div class="grow" style="top:52px;height:13px">
<i class="rh"></i>
<b class="c c1"><u>1009</u></b><b class="c c2"><u>Smartphone Mediacom PhonePad Duo…</u></b><b class="c c3">12/03/2020</b><b class="c c4">53,00</b><b class="c c5">3</b><b class="c c6">159,00</b>
</div>
<div class="grow" style="top:65px;height:13px">
<i class="rh"></i>
<b class="c c1"><u>40041</u></b><b class="c c2"><u>eFootball PES 2020, Playstation 4 sp4…</u></b><b class="c c3">12/03/2020</b><b class="c c4">32,90</b><b class="c c5">29</b><b class="c c6">954,10</b>
</div>
<div class="grow" style="top:78px;height:12px">
<i class="rh"></i>
<b class="c c1"><u>38560</u></b><b class="c c2"><u>Electronic Arts FIFA 20, Xbox One 10…</u></b><b class="c c3">12/03/2020</b><b class="c c4">35,90</b><b class="c c5">20</b><b class="c c6">718,00</b>
</div>
<div class="grow" style="top:90px;height:13px">
<i class="rh"></i>
<b class="c c1"><u>26054</u></b><b class="c c2"><u>MEDIACOM ALL IN ONE 211 21.5/4/3…</u></b><b class="c c3">12/03/2020</b><b class="c c4">179,00</b><b class="c c5">1</b><b class="c c6">179,00</b>
</div>
<div class="grow sel" style="top:103px;height:13px">
<i class="rh"></i>
<b class="c c1"><u>26056</u></b><b class="c c2"><u>MEDIACOM ALL IN ONE 241 23.8 4/3…</u></b><b class="c c3">12/03/2020</b><b class="c c4">230,10</b><b class="c c5">2</b><b class="c c6">460,20</b>
</div>
<div class="grow" style="top:116px;height:12px">
<i class="rh"></i>
<b class="c c1"><u>30370</u></b><b class="c c2"><u>MEDIACOM SmartPad 10 Eclipse - tabl…</u></b><b class="c c3">12/03/2020</b><b class="c c4">85,00</b><b class="c c5">2</b><b class="c c6">170,00</b>
</div>
<div class="grow" style="top:128px;height:13px">
<i class="rh"></i>
<b class="c c1"><u>249</u></b><b class="c c2"><u>Console New Nintendo 2DS XL, Bianco…</u></b><b class="c c3">12/03/2020</b><b class="c c4">100,00</b><b class="c c5">12</b><b class="c c6">1'200,00</b>
</div>
<div class="grow" style="top:141px;height:12px">
<i class="rh"></i>
<b class="c c1"><u>30368</u></b><b class="c c2"><u>MEDIACOM M-AO212 - All-in-one - Ce…</u></b><b class="c c3">12/03/2020</b><b class="c c4">209,74</b><b class="c c5">2</b><b class="c c6">419,48</b>
</div>
<div class="grow" style="top:153px;height:13px">
<i class="rh"></i>
<b class="c c1"><u>30360</u></b><b class="c c2"><u>MEDIACOM SportCam XPRO 215 Go H…</u></b><b class="c c3">12/03/2020</b><b class="c c4">34,90</b><b class="c c5">2</b><b class="c c6">69,80</b>
</div>
<div class="grow" style="top:166px;height:13px">
<i class="rh"></i>
<b class="c c1"><u>30372</u></b><b class="c c2"><u>MEDIACOM SOS Spider batteria ester…</u></b><b class="c c3">12/03/2020</b><b class="c c4">10,50</b><b class="c c5">3</b><b class="c c6">31,50</b>
</div>
<div class="grow" style="top:179px;height:12px">
<i class="rh"></i>
<b class="c c1"><u>30362</u></b><b class="c c2"><u>MEDIACOM SmartWatch V100 smartw…</u></b><b class="c c3">12/03/2020</b><b class="c c4">74,90</b><b class="c c5">2</b><b class="c c6">149,80</b>
</div>
<div class="grow" style="top:191px;height:13px">
<i class="rh"></i>
<b class="c c1"><u>30359</u></b><b class="c c2"><u>MEDIACOM SportBit sistema di monito…</u></b><b class="c c3">12/03/2020</b><b class="c c4">17,50</b><b class="c c5">2</b><b class="c c6">35,00</b>
</div>
<div class="grow" style="top:204px;height:13px">
<i class="rh"></i>
<b class="c c1"><u>30367</u></b><b class="c c2"><u>MEDIACOM SmartPad iyo 7 - Tablet - …</u></b><b class="c c3">12/03/2020</b><b class="c c4">52,50</b><b class="c c5">1</b><b class="c c6">52,50</b>
</div>
<div class="grow" style="top:217px;height:12px">
<i class="rh"></i>
<b class="c c1"><u>30365</u></b><b class="c c2"><u>MEDIACOM SmartPad iyo 8 - tablet - …</u></b><b class="c c3">12/03/2020</b><b class="c c4">60,00</b><b class="c c5">2</b><b class="c c6">120,00</b>
</div>
<div class="grow" style="top:229px;height:13px">
<i class="rh"></i>
<b class="c c1"><u>30363</u></b><b class="c c2"><u>MEDIACOM SmartWatch V90 smartwa…</u></b><b class="c c3">12/03/2020</b><b class="c c4">49,90</b><b class="c c5">2</b><b class="c c6">99,80</b>
</div>
<div class="grow" style="top:242px;height:13px">
<i class="rh"></i>
<b class="c c1"><u>38559</u></b><b class="c c2"><u>Electronic Arts FIFA 20, PS4  1056027</u></b><b class="c c3">10/03/2020</b><b class="c c4">40,00</b><b class="c c5">292</b><b class="c c6">11'680,00</b>
</div>
<div class="grow" style="top:255px;height:12px">
<i class="rh"></i>
<b class="c c1"><u>39603</u></b><b class="c c2"><u>MGA Entertainment 557067E7C L O L …</u></b><b class="c c3">05/03/2020</b><b class="c c4">14,34</b><b class="c c5">96</b><b class="c c6">1'376,64</b>
</div>
<div class="grow" style="top:267px;height:13px">
<i class="rh"></i>
<b class="c c1"><u>40494</u></b><b class="c c2"><u>Iphone 11 pro max 64gb Verde notte …</u></b><b class="c c3">05/03/2020</b><b class="c c4">1'051,85</b><b class="c c5">5</b><b class="c c6">5'259,25</b>
</div>
<div class="grow" style="top:280px;height:13px">
<i class="rh"></i>
<b class="c c1"><u>39363</u></b><b class="c c2"><u>Dyson V11 Absolute</u></b><b class="c c3">02/03/2020</b><b class="c c4">403,28</b><b class="c c5">-348</b><b class="c c6">-140'341,44</b>
</div>
<div class="grow" style="top:293px;height:12px">
<i class="rh"></i>
<b class="c c1"><u>40425</u></b><b class="c c2"><u>Xiaomi Redmi Note 7 USATO 6.3&quot; 4 GB…</u></b><b class="c c3">28/02/2020</b><b class="c c4">159,00</b><b class="c c5">1</b><b class="c c6">159,00</b>
</div>
<div class="grow" style="top:305px;height:13px">
<i class="rh"></i>
<b class="c c1"><u>41440</u></b><b class="c c2"><u>APPLE AURICOLARI TRUE WIRE.BT A…</u></b><b class="c c3">27/02/2020</b><b class="c c4">182,58</b><b class="c c5">200</b><b class="c c6">36'516,00</b>
</div>
<div class="grow" style="top:318px;height:12px">
<i class="rh"></i>
<b class="c c1"><u>37804</u></b><b class="c c2"><u>APPLE AURICOLARI TRUE WIRE.BT A…</u></b><b class="c c3">27/02/2020</b><b class="c c4">182,58</b><b class="c c5">-982</b><b class="c c6">-179'293,56</b>
</div>
<div class="grow" style="top:330px;height:13px">
<i class="rh"></i>
<b class="c c1"><u>41156</u></b><b class="c c2"><u>Dyson Supersonic Antracite, Porpora …</u></b><b class="c c3">24/02/2020</b><b class="c c4">234,52</b><b class="c c5">39</b><b class="c c6">9'146,28</b>
</div>
<div class="grow" style="top:343px;height:13px">
<i class="rh"></i>
<b class="c c1"><u>39254</u></b><b class="c c2"><u>SAMSUNG GALAXY A20e BLACK SM-A…</u></b><b class="c c3">22/02/2020</b><b class="c c4">132,60</b><b class="c c5">20</b><b class="c c6">2'652,00</b>
</div>
<div class="grow" style="top:356px;height:12px">
<i class="rh"></i>
<b class="c c1"><u>39247</u></b><b class="c c2"><u>SAMSUNG GALAXY A40 BLUE 64GB</u></b><b class="c c3">22/02/2020</b><b class="c c4">178,44</b><b class="c c5">-10</b><b class="c c6">-1'784,40</b>
</div>
<div class="grow" style="top:368px;height:13px">
<i class="rh"></i>
<b class="c c1"><u>39246</u></b><b class="c c2"><u>SAMSUNG GALAXY A40 BLACK 64GB s…</u></b><b class="c c3">22/02/2020</b><b class="c c4">177,24</b><b class="c c5">-5</b><b class="c c6">-886,20</b>
</div>
<div class="grow" style="top:381px;height:13px">
<i class="rh"></i>
<b class="c c1"><u>38237</u></b><b class="c c2"><u>TV ARIELLI 24 HD LED 24DN5T2 12V</u></b><b class="c c3">21/02/2020</b><b class="c c4">58,53</b><b class="c c5">30</b><b class="c c6">1'755,90</b>
</div>
<div class="vsb"><div class="sbtn up"><i></i></div><div class="thumb"><i class="grip"></i></div><div class="sbtn dn"><i></i></div></div>
</div>
<!-- Stampa button -->
<div class="btn" style="left:19px;top:832px;width:264px;height:40px"></div>
<svg style="left:85px;top:841px" width="20" height="20" viewBox="0 0 20 20">
<path d="M3.500 1.500l8-.5 2.500 7-8 1.500z" fill="#dce4fa" stroke="#b4bcd4" stroke-width=".7"/>
<path d="M1 9.500l4-2 1 2 8-1.500-.5-1.500 5 1.500v5.500l-8 4.500-9.500-2.500z" fill="#d8dcd0" stroke="#a8aca0" stroke-width=".7"/>
<path d="M1 9.500l9.500 2.500 8-4" fill="none" stroke="#f4f6ee" stroke-width="1"/>
<path d="M10.500 12v6l8-4.500V8z" fill="#b8c0ac"/><path d="M1.500 12.500l8.500 2.300v2.200l-8.500-2.200z" fill="#fbfbf6"/>
<path d="M14 8.800l3-1.300" stroke="#58b048" stroke-width="1.200"/></svg>
<b style="left:139px;top:848px;font-size:8.400px;white-space:nowrap;color:#222">Stampa (F9)</b>
<!-- status bar -->
<div id="wstat">
  <b style="left:2px;width:455px;letter-spacing:-.1px">OK INFORMATICA SRL</b>
  <b style="left:460px;width:455px">Ready Pro V21.12.16</b>
  <b style="left:918px;width:457px">Intestatario licenza : OK INFORMATICA SRL</b>
  <b style="left:1377px;width:62px;letter-spacing:.55px">21/04/2020</b>
  <b style="left:1441px;width:62px">14:19</b>
  <b style="left:1506px;width:13px"></b>
</div>
<!-- taskbar -->
<div id="tb">
<div id="pg2" style="left:-200px;top:-998px;width:1920px;height:1039px">
<div style="left:1284px;top:998px;width:436px;height:32px;background:#151d40"></div>
<div style="left:238px;top:998px;width:272px;height:32px;background:#fffff7;border-bottom:1px solid #c9c9c4"></div>
<svg style="left:212px;top:1007px" width="14" height="14" viewBox="0 0 14 14"><path d="M0 2l5.600-.8v5.300H0zM6.400 1.100L13.500 0v6.500H6.400zM0 7.300h5.600v5.300L0 11.800zM6.400 7.300h7.100v6.500l-7.100-1.100z" fill="#fff"/></svg>
<svg style="left:246px;top:1005px" width="16" height="16" viewBox="0 0 16 16"><circle cx="9.300" cy="6.300" r="4.300" fill="none" stroke="#333" stroke-width="1.200"/><path d="M6.200 9.500L1.500 14.300" stroke="#333" stroke-width="1.400"/></svg>
<b class="ts" style="left:269px;top:1006px">Scrivi qui per eseguire la ricerca</b>
<svg style="left:521px;top:1006px" width="16" height="16" viewBox="0 0 16 16"><circle cx="8.200" cy="7.800" r="5.500" fill="none" stroke="#fff" stroke-width="1.600"/></svg>
<svg style="left:559px;top:1006px" width="17" height="15" viewBox="0 0 17 15"><path d="M2.500 3.800h8.500v6.500H2.500z" fill="none" stroke="#fff" stroke-width="1.200"/><path d="M2 1.500h9.500M2 12.700h9.500" stroke="#fff" stroke-width="1.100"/><path d="M14 1.200v2.600M14 5.800v7.200" stroke="#fff" stroke-width="1.300"/></svg>
<svg style="left:597px;top:1004px" width="19" height="20" viewBox="0 0 19 20"><path d="M1.500 9.500C2 4.500 5.500 1.800 9.700 1.800c4.800 0 7.800 3.300 7.800 8v1.700H6.800c.2 2.300 2 3.600 4.600 3.600 1.800 0 3.500-.5 5-1.400v3.600c-1.600.9-3.600 1.400-5.800 1.400-5 0-8.300-3-8.300-7.600 0-2.400 1.200-4.600 3.200-6-1.600 1-3 2.500-4 4.400zm5.400-1.800h6.300c0-2-1.200-3.200-3-3.200-1.700 0-3 1.200-3.300 3.200z" fill="#1f88e4"/></svg>
<svg style="left:633px;top:1004px" width="18" height="20" viewBox="0 0 18 20"><path d="M9 4.500C3 2.800.8 6.500 1.800 11c.9 4 4.200 7.800 7.200 8.300 3-.5 6.300-4.300 7.200-8.300C17.200 6.500 15 2.800 9 4.500z" fill="#d62c22"/><path d="M9 6c-3-1-5 .5-5 3.500" stroke="#f0695a" stroke-width="1.200" fill="none"/><path d="M4.500 4.300L9 1l4.500 3.300L9 5.600z" fill="#3f8a2a"/></svg>
<div style="left:663px;top:1028px;width:83px;height:2px;background:#6fb0ea"></div>
<svg style="left:667px;top:1006px" width="17" height="16" viewBox="0 0 17 16"><path d="M5.300 .3h6v7h4.300L8.300 15 .9 7.300h4.400z" fill="#2e8fe8"/></svg>
<b class="tt" style="left:688px;top:1007px;letter-spacing:0">Download</b>
<div style="left:752px;top:1028px;width:83px;height:2px;background:#6fb0ea"></div>
<svg style="left:757px;top:1005px" width="14" height="19" viewBox="0 0 14 19"><path d="M1 1h8.500l1 1.300V16H1z" fill="#f7d46a"/><path d="M3.500 3h9.200v15H2.200l1.300-1.500z" fill="#fbe7a0"/><path d="M1 16l1.200 2H3.500z" fill="#d8a830"/></svg>
<b class="tt" style="left:778px;top:1007px;letter-spacing:-.8px">FORNITORI</b>
<div style="left:842px;top:1028px;width:82px;height:2px;background:#6fb0ea"></div>
<svg style="left:845px;top:1005px" width="18" height="18" viewBox="0 0 18 18"><circle cx="9" cy="9" r="8.500" fill="#e33b2e"/><path d="M9 9L1.600 4.800A8.500 8.500 0 0 0 7.600 17.400z" fill="#2da94f"/><path d="M9 9l-1.400 8.400A8.500 8.500 0 0 0 17.400 7.500H9z" fill="#fbbc05"/><path d="M9 .5a8.500 8.500 0 0 1 7.700 5L9 9 1.600 4.800A8.500 8.500 0 0 1 9 .5z" fill="#e33b2e"/><circle cx="9" cy="9" r="4" fill="#fff"/><circle cx="9" cy="9" r="3.100" fill="#4285f4"/></svg>
<b class="tt" style="left:867px;top:1007px">valorizzazi...</b>
<div style="left:932px;top:1028px;width:82px;height:2px;background:#6fb0ea"></div>
<svg style="left:935px;top:1004px" width="20" height="20" viewBox="0 0 20 20"><rect width="20" height="20" fill="#ef443b"/><path d="M3.500 10l4.700-4.700 4.700 4.700-4.700 4.700z" fill="#fff"/><path d="M11 5.300h1.400l4.400 4.700-4.400 4.700H11l-1.200-1.200 3.300-3.500-3.300-3.500z" fill="#fff"/></svg>
<b class="tt" style="left:957px;top:1007px;letter-spacing:-.55px">793731159 ...</b>
<div style="left:1017px;top:998px;width:89px;height:32px;background:#b0622f"></div>
<div style="left:1017px;top:1028px;width:89px;height:2px;background:#e8782c"></div>
<svg style="left:1023px;top:1004px" width="20" height="20" viewBox="0 0 20 20"><rect width="20" height="20" fill="#ef443b"/><path d="M3.500 10l4.700-4.700 4.700 4.700-4.700 4.700z" fill="#fff"/><path d="M11 5.300h1.400l4.400 4.700-4.400 4.700H11l-1.200-1.200 3.300-3.500-3.300-3.500z" fill="#fff"/></svg>
<b class="tt" style="left:1046px;top:1007px">AnyDesk</b>
<div style="left:1106px;top:998px;width:89px;height:32px;background:#34474d"></div>
<div style="left:1195px;top:998px;width:89px;height:32px;background:#49595f"></div>
<div style="left:1106px;top:1028px;width:178px;height:2px;background:#6fb0ea"></div>
<svg style="left:1112px;top:1004px" width="19" height="20" viewBox="0 0 19 20"><path d="M9.500 1L18 4.500v10L9.500 19 1 14.500v-10z" fill="#e0a810"/><path d="M1 4.500L9.500 8v11L1 14.500z" fill="#f4cc28"/><path d="M9.500 1L18 4.500 9.500 8 1 4.500z" fill="#fbe060"/></svg>
<b class="tt" style="left:1135px;top:1007px">Sincronizza...</b>
<svg style="left:1202px;top:1004px" width="18" height="20" viewBox="0 0 18 20"><path d="M9 4.500C3 2.800.8 6.500 1.800 11c.9 4 4.200 7.800 7.200 8.300 3-.5 6.300-4.300 7.200-8.300C17.200 6.500 15 2.800 9 4.500z" fill="#d62c22"/><path d="M9 6c-3-1-5 .5-5 3.500" stroke="#f0695a" stroke-width="1.200" fill="none"/><path d="M4.500 4.300L9 1l4.500 3.300L9 5.600z" fill="#3f8a2a"/></svg>
<b class="tt" style="left:1224px;top:1007px">Ready Pro ...</b>
<div style="left:1288px;top:1028px;width:81px;height:2px;background:#6fb0ea"></div>
<svg style="left:1290px;top:1004px" width="20" height="20" viewBox="0 0 20 20"><path d="M1 8.500L10 2l9 6.500V18H1z" fill="#dcdcf0"/><path d="M3.500 5.500h13v8h-13z" fill="#fbf6d8"/><path d="M1 8.500l9 6 9-6V18H1z" fill="#f0f0fc" stroke="#b8b8d4" stroke-width=".7"/><path d="M1 18l7-5.500M19 18l-7-5.500" stroke="#b8b8d4" stroke-width=".7"/></svg>
<b class="tt" style="left:1313px;top:1007px;letter-spacing:-.8px">GESTIONE ...</b>
<div style="left:1377px;top:1028px;width:82px;height:2px;background:#6fb0ea"></div>
<svg style="left:1379px;top:1004px" width="21" height="20" viewBox="0 0 21 20"><path d="M9 4.500c5 0 9 2.800 9 7s-3.500 6.500-8 6.500c-2 0-2-2-3.500-2S1.500 15 1.500 11 4 4.500 9 4.500z" fill="#e8e4dc" stroke="#9aa4c0" stroke-width=".8"/><circle cx="5.500" cy="9" r="1.400" fill="#d83a2a"/><circle cx="9" cy="7.500" r="1.400" fill="#f0c020"/><circle cx="12.500" cy="8.500" r="1.400" fill="#2c9a3c"/><circle cx="14.500" cy="12" r="1.400" fill="#2c6cd8"/><path d="M17.500 1l1.500 1-7 12-1.800.6.300-1.800z" fill="#d8903c"/><path d="M17.500 1l1.500 1-1.200 2-1.500-1z" fill="#e84a3a"/></svg>
<b class="tt" style="left:1402px;top:1007px;letter-spacing:-.1px">Immagine ...</b>
<svg style="left:1466px;top:1006px" width="160" height="17" viewBox="0 0 160 17"><path d="M2.500 2.500L8 1l5.500 1.500v5c0 4-3 6.500-5.500 7.500-2.500-1-5.500-3.500-5.500-7.500z" fill="#fff"/><path d="M8 1v14M2.500 7.500h11" stroke="#151d40" stroke-width="1"/><path d="M11.500 8l4 7h-8z" fill="#f2b714"/><path d="M11.500 10.500v2.500" stroke="#222" stroke-width="1"/><rect x="20.500" y="2.500" width="12" height="10" fill="none" stroke="#fff" stroke-width="1.200"/><path d="M24 10a3 3 0 1 1 5-3" fill="none" stroke="#fff" stroke-width="1.100"/><circle cx="31.500" cy="13" r="2.800" fill="#f08c1c"/><rect x="39" y="1" width="13.500" height="14" fill="#ef443b"/><path d="M41.500 8l3.200-3.200L48 8l-3.300 3.200z" fill="#fff"/><path d="M47 4.800l3.200 3.200-3.200 3.200" fill="none" stroke="#fff" stroke-width="1.100"/><rect x="58" y="3.500" width="9" height="8" rx="1" fill="#c0c8d4"/><circle cx="66.500" cy="9" r="4.500" fill="#1f78d8"/><path d="M66 6.500v5" stroke="#9ccaf4" stroke-width="1"/><path d="M79 12.500a3 3 0 0 1 .5-6 4.200 4.200 0 0 1 8-1 3.500 3.500 0 0 1 1 7z" fill="#7c849c"/><path d="M78.500 3l11 11" stroke="#c4c8d4" stroke-width="1.300"/><path d="M97 6h2.500l3.500-3.500v11L99.500 10H97z" fill="none" stroke="#fff" stroke-width="1.100"/><path d="M105 5.500a4 4 0 0 1 0 5M107.200 3.500a7 7 0 0 1 0 9" fill="none" stroke="#fff" stroke-width="1.100"/><rect x="118.500" y="3.500" width="9.500" height="7" fill="none" stroke="#fff" stroke-width="1.100"/><path d="M123.200 10.500v3M120.500 14h6M116 2.500v11M114.500 4.500h3" stroke="#fff" stroke-width="1.100"/><rect x="134.500" y="2.500" width="18.500" height="10.500" rx="1.200" fill="none" stroke="#fff" stroke-width="1.100"/><path d="M137 5.500h14M137 7.800h14" stroke="#fff" stroke-width="1" stroke-dasharray="1.300 1"/><path d="M139.500 10.500h9" stroke="#fff" stroke-width="1"/></svg>
<b class="tt" style="left:1627px;top:1000px;width:47px;text-align:center">14:19</b>
<b class="tt" style="left:1622px;top:1014px;width:57px;text-align:center;letter-spacing:-.2px">21/04/2020</b>
<svg style="left:1686px;top:1007px" width="16" height="16" viewBox="0 0 16 16"><path d="M1.500 1.500h12.500v9.500h-4.500L7.700 13.500 5.900 11H1.500z" fill="none" stroke="#fff" stroke-width="1.100"/></svg>
<div style="left:1716px;top:998px;width:1px;height:32px;background:#8a8e9c"></div>
</div></div>

</div>
</body>
</html>
